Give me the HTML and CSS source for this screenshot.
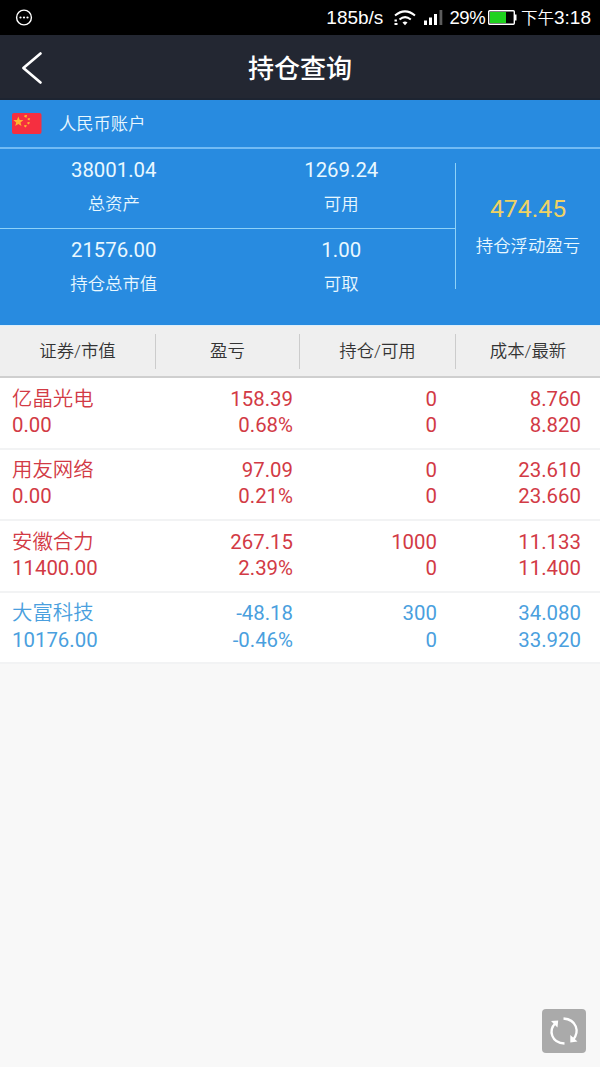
FILE: index.html
```html
<!DOCTYPE html>
<html lang="zh-CN">
<head>
<meta charset="utf-8">
<title>持仓查询</title>
<link rel="stylesheet" href="styles.css">
</head>
<body>
<div class="screen">
  <div class="status">
    <svg class="status-more" width="18" height="18" viewBox="0 0 18 18"><circle cx="9" cy="8.500" r="7.4" fill="none" stroke="#fff" stroke-width="1.4"/><g fill="#fff"><circle cx="5.500" cy="8.500" r="1.1"/><circle cx="9" cy="8.500" r="1.1"/><circle cx="12.500" cy="8.500" r="1.1"/></g></svg>
    <span class="speed">185b/s</span>
    <svg class="wifi" width="22" height="16" viewBox="0 0 22 16"><g fill="none" stroke="#fff" stroke-width="2"><path d="M1 5.500Q11 -2.700 21 5.500"/><path d="M5.500 9.500Q11 4.700 16.800 9.500"/></g><path d="M8.500 12.500Q11 10.500 13.500 12.500L11 15.200Z" fill="#fff"/><g fill="#fff"><rect x=".5" y="9.500" width="2.400" height="2"/><rect x=".5" y="13" width="3" height="2"/></g></svg>
    <svg class="signal" width="19" height="15" viewBox="0 0 19 15"><g fill="#fff"><rect x="0" y="10.500" width="3" height="4.500"/><rect x="5" y="7.500" width="3" height="7.500"/><rect x="10" y="4" width="3" height="11"/></g><rect x="15.500" y="0" width="2.800" height="15" fill="#5c5c5c"/></svg>
    <span class="percent">29%</span>
    <svg class="battery" width="29" height="15" viewBox="0 0 29 15"><rect x=".7" y=".7" width="25.6" height="13.6" rx="1" fill="none" stroke="#fff" stroke-width="1.4"/><rect x="2" y="2" width="16" height="11" fill="#1ed21e"/><path d="M27 4.5h1.5v6H27z" fill="#fff"/></svg>
    <span class="clock"><span class="ampm">下午</span>3:18</span>
  </div>
  <header class="titlebar">
    <svg class="back" width="24" height="34" viewBox="0 0 24 34"><path d="M20.500 2.500L3.400 17L20.500 31.500" fill="none" stroke="#fff" stroke-width="2.7" stroke-linecap="round" stroke-linejoin="round"/></svg>
    <h1 class="title">持仓查询</h1>
  </header>
  <div class="account">
    <svg class="flag" width="30" height="21" viewBox="0 0 30 21"><rect width="29.500" height="21" rx="2" fill="#f52f40"/><g fill="#ffb52e"><path d="M6.300 3.500l1.400 3.400 3.700.2-2.900 2.400 1 3.600-3.200-2-3.100 2 1-3.600-2.900-2.400 3.700-.2z"/><path d="M12.500 2.300l2.600-.2-.7 2.600-2.200-1zM15.800 5.200l2.400.1-.9 2.200-1.700-1zM15.600 9l2.400.2-1.100 2.200-1.600-1zM12.300 11.900l2.600.3-1.100 2.400-1.600-1.100z"/></g></svg>
    <span>人民币账户</span>
  </div>
  <section class="summary">
    <div class="metrics">
      <div class="metric"><b class="num">38001.04</b><span class="label">总资产</span></div>
      <div class="metric"><b class="num">1269.24</b><span class="label">可用</span></div>
      <div class="metric"><b class="num">21576.00</b><span class="label">持仓总市值</span></div>
      <div class="metric"><b class="num">1.00</b><span class="label">可取</span></div>
    </div>
    <div class="profit"><b class="profit-num">474.45</b><span class="label">持仓浮动盈亏</span></div>
  </section>
  <div class="columns head">
    <div class="th">证券/市值</div><div class="th">盈亏</div><div class="th">持仓/可用</div><div class="th">成本/最新</div>
  </div>
  <main class="list">
    <div class="columns row up"><div class="cell"><span class="name">亿晶光电</span><span>0.00</span></div><div class="cell"><span>158.39</span><span>0.68%</span></div><div class="cell"><span>0</span><span>0</span></div><div class="cell"><span>8.760</span><span>8.820</span></div></div>
    <div class="columns row up"><div class="cell"><span class="name">用友网络</span><span>0.00</span></div><div class="cell"><span>97.09</span><span>0.21%</span></div><div class="cell"><span>0</span><span>0</span></div><div class="cell"><span>23.610</span><span>23.660</span></div></div>
    <div class="columns row up"><div class="cell"><span class="name">安徽合力</span><span>11400.00</span></div><div class="cell"><span>267.15</span><span>2.39%</span></div><div class="cell"><span>1000</span><span>0</span></div><div class="cell"><span>11.133</span><span>11.400</span></div></div>
    <div class="columns row down"><div class="cell"><span class="name">大富科技</span><span>10176.00</span></div><div class="cell"><span>-48.18</span><span>-0.46%</span></div><div class="cell"><span>300</span><span>0</span></div><div class="cell"><span>34.080</span><span>33.920</span></div></div>
  </main>
  <button class="refresh" aria-label="刷新">
    <svg width="44" height="44" viewBox="0 0 44 44"><g fill="none" stroke="#fff" stroke-width="2.3"><path d="M22.500 34.500C9.500 34 6 21.500 13.500 14"/><path d="M21.500 9.500C34.500 10.500 38 22.500 31 31"/></g><path d="M9 12L16.200 11.500L15.500 18.500ZM28.300 26V33.500L35.500 32.500Z" fill="#fff"/></svg>
  </button>
</div>
</body>
</html>
```
FILE: styles.css
```css
* { box-sizing: border-box; }
body { margin: 0; font-family: Roboto, "Noto Sans CJK SC", sans-serif; }
b { font-weight: 400; }
.screen { width: 600px; height: 1067px; background: #f8f8f8; display: flex; flex-direction: column; position: relative; overflow: hidden; }
.status { height: 35px; flex: none; background: #000; color: #fff; display: flex; align-items: center; padding: 0 9px 0 15px; font: 19px/35px "Liberation Sans", "Noto Sans CJK SC", sans-serif; }
.status > * { flex: none; }
.speed { margin-left: auto; }
.wifi { margin-left: 11px; }
.signal { margin-left: 8px; }
.percent { margin-left: 6px; font-size: 18.500px; letter-spacing: -.3px; }
.battery { margin-left: 2px; }
.clock { margin-left: 4.500px; white-space: nowrap; }
.ampm { font-size: 16.500px; font-weight: 350; }
.titlebar { height: 65px; flex: none; background: #232732; border-bottom: 2px solid #1d2431; display: grid; grid-template-columns: 60px 1fr 60px; align-items: center; color: #fff; }
.back { margin-left: 20px; margin-top: 2px; }
.title { margin: 4px 0 0; text-align: center; font-size: 26px; line-height: 40px; font-weight: 500; }
.account { height: 49px; flex: none; background: #288be0; border-bottom: 2px solid #72bbf4; display: flex; align-items: center; gap: 17px; padding-left: 12px; color: #e9f8ff; font-size: 17.300px; line-height: 24px; font-weight: 350; }
.summary { height: 176px; flex: none; background: #288be0; display: grid; grid-template-columns: 455px 145px; color: #e9f8ff; }
.metrics { display: grid; grid-template-columns: 1fr 1fr; grid-template-rows: 80px 96px; }
.metric { display: flex; flex-direction: column; align-items: center; padding-top: 8px; }
.metric:nth-child(-n+2) { border-bottom: 1.500px solid #8ed2f8; }
.num { font-size: 20.400px; line-height: 26px; }
.label { font-size: 17.400px; line-height: 26px; white-space: nowrap; font-weight: 350; }
.num + .label { margin-top: 8px; }
.profit { height: 126px; margin-top: 14px; border-left: 1.500px solid #8ed2f8; display: flex; flex-direction: column; align-items: center; padding-top: 30px; }
.profit-num { font-size: 24.800px; line-height: 32px; color: #efd264; }
.profit .label { margin-top: 8px; }
.columns { display: grid; grid-template-columns: 156px 144px 156px 144px; }
.head { height: 53px; flex: none; background: #efefef; border-top: 1px solid #dceefa; border-bottom: 2px solid #cfcfcf; padding: 8px 0; color: #333; }
.th { text-align: center; font-size: 17.400px; line-height: 35px; border-right: 1.500px solid #ccc; font-weight: 350; }
.th:last-child { border-right: 0; }
.row { height: 71.600px; background: #fff; border-bottom: 2px solid #f2f3f4; padding-top: 7.500px; }
.cell { display: flex; flex-direction: column; text-align: right; padding-right: 7px; font-size: 20.400px; line-height: 26.300px; }
.cell:first-child { text-align: left; padding: 0 0 0 12px; }
.cell:nth-child(3) { padding-right: 19px; }
.cell:nth-child(4) { padding-right: 19px; }
.name { font-weight: 350; }
.up { color: #d23a45; }
.down { color: #4a9fde; }
.refresh { position: absolute; right: 14px; bottom: 14px; width: 44px; height: 44px; padding: 0; border: 0; border-radius: 4px; background: #aaa; }
.refresh svg { display: block; }
```
